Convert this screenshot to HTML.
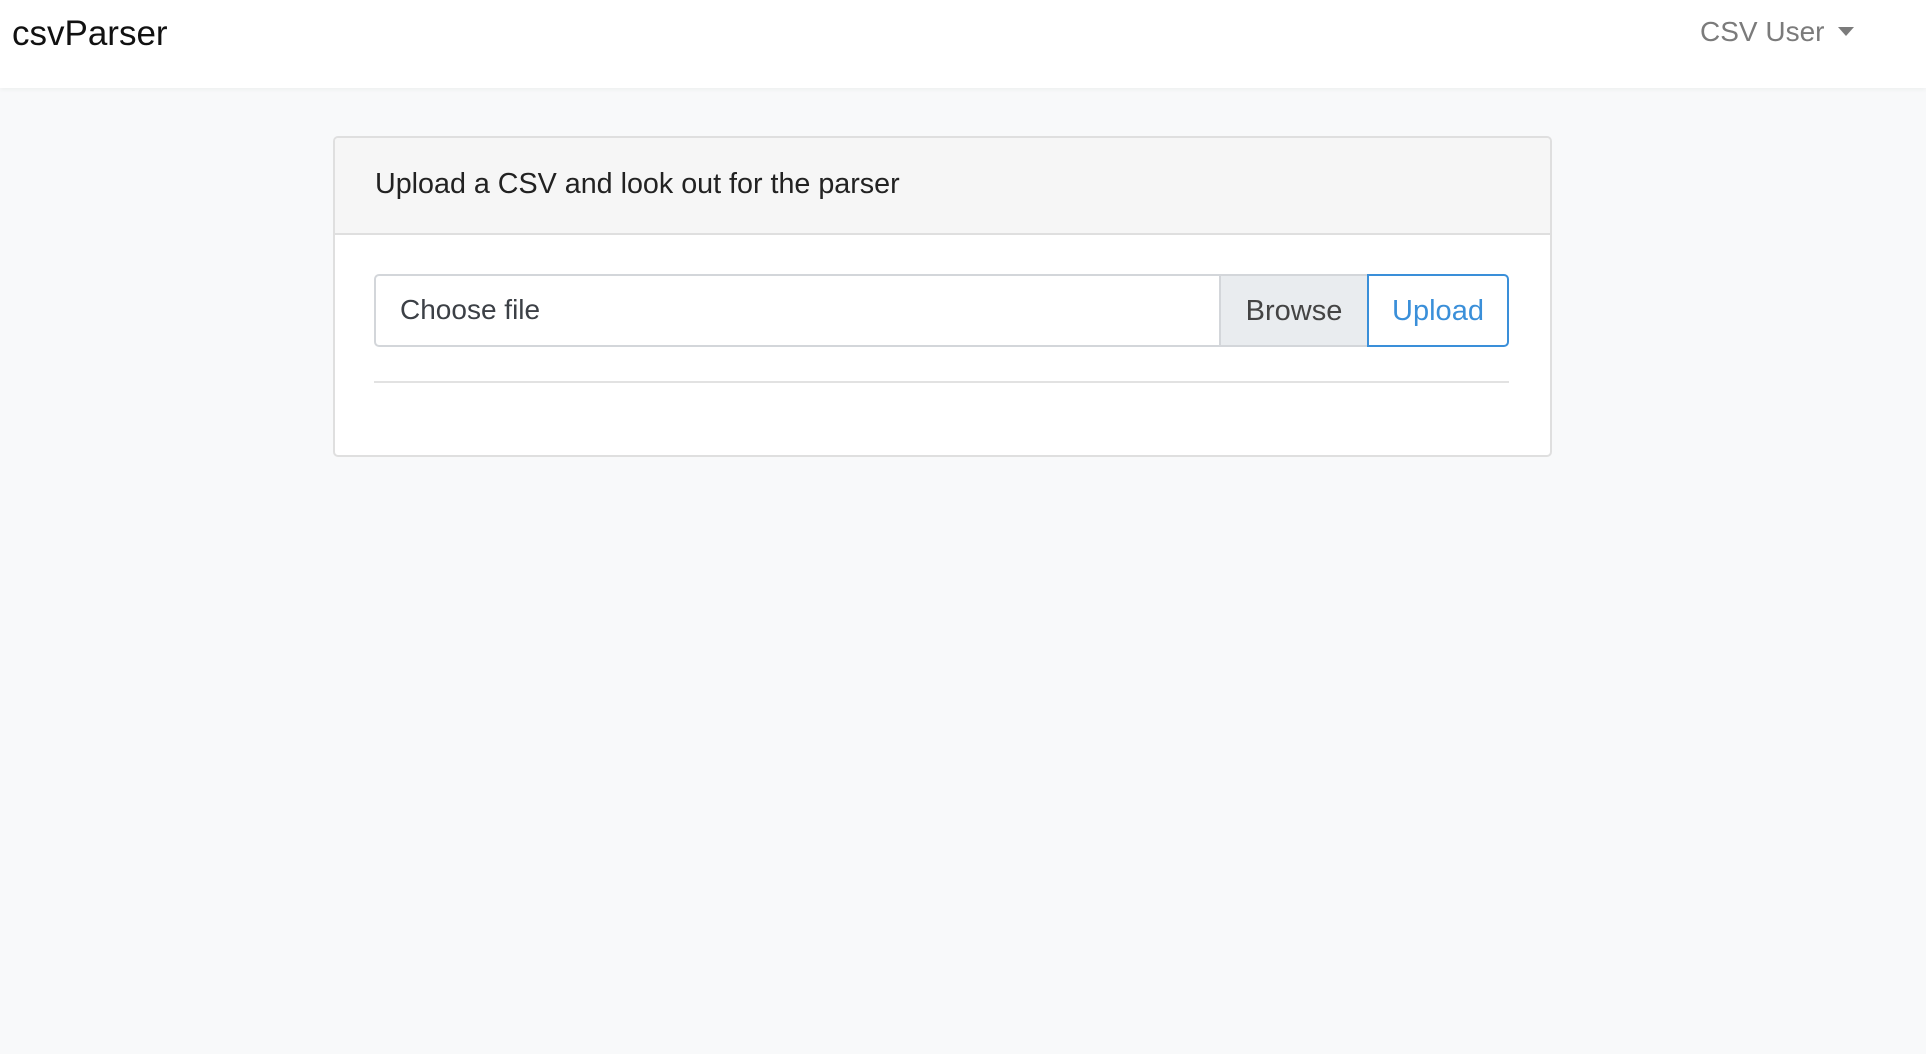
<!DOCTYPE html>
<html><head><style>
body{margin:0;width:1926px;height:1054px;background:#f8f9fa;font-family:"Liberation Sans",sans-serif;position:relative;overflow:hidden}
.nav{position:absolute;left:0;top:0;width:1926px;height:88px;background:#fff;box-shadow:0 2px 4px rgba(0,0,0,.04)}
.brand{position:absolute;left:12px;top:14px;font-size:35px;color:#111}
.user{position:absolute;left:1700px;top:16px;font-size:28px;color:#7b7b7b}
.caret{position:absolute;left:1838px;top:27px;width:0;height:0;border-left:8px solid transparent;border-right:8px solid transparent;border-top:9px solid #7b7b7b}
.card{position:absolute;left:333px;top:136px;width:1215px;height:317px;border:2px solid #dfdfdf;border-radius:5px;background:#fff;overflow:hidden}
.hd{background:#f6f6f6;border-bottom:2px solid #dfdfdf;font-size:28.7px;color:#222;line-height:93px;padding-left:40px;box-sizing:border-box;height:97px}
.inp{position:absolute;left:39px;top:136px;width:843px;height:69px;border:2px solid #d3d6da;border-radius:5px 0 0 5px;background:#fff}
.inp span{position:absolute;left:24px;top:18px;font-size:28px;color:#3c4046}
.br{position:absolute;left:884px;top:136px;width:146px;height:69px;border:2px solid #d3d6da;background:#e9ecef;font-size:29px;color:#444;text-align:center;line-height:71px}
.up{position:absolute;left:1032px;top:136px;width:138px;height:69px;border:2px solid #3a8fd9;border-radius:0 5px 5px 0;font-size:29px;color:#3a8fd9;text-align:center;line-height:71px;background:#fff}
.sep{position:absolute;left:39px;top:243px;width:1135px;height:2px;background:#e2e2e2}
</style></head><body>
<div class="nav"><div class="brand">csvParser</div><div class="user">CSV User</div><div class="caret"></div></div>
<div class="card">
<div class="hd">Upload a CSV and look out for the parser</div>
<div class="inp"><span>Choose file</span></div>
<div class="br">Browse</div>
<div class="up">Upload</div>
<div class="sep"></div>
</div>
</body></html>
